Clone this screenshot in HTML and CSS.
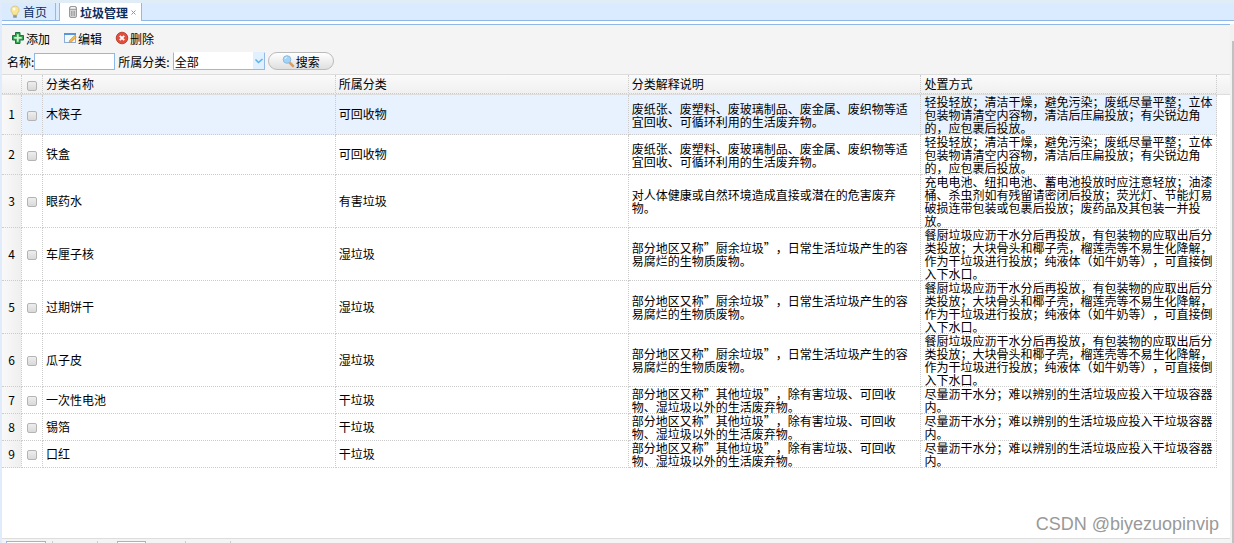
FILE: index.html
```html
<!DOCTYPE html>
<html lang="zh-CN">
<head>
<meta charset="utf-8">
<title>垃圾管理</title>
<link rel="stylesheet" href="styles.css">
</head>
<body>
<div class="app">
  <nav class="tabs">
    <a class="tab" href="#home">
      <svg class="icon-sm" viewBox="0 0 12 14"><path d="M6 1a4 4 0 0 0-2.500 7.200L4 10h4l.5-1.800A4 4 0 0 0 6 1z" fill="#f8e596" stroke="#d8c27c" stroke-width=".8"/><path d="M4.200 10.200h3.600v2.500H4.200z" fill="#8d949c"/><circle cx="5" cy="4" r="1.500" fill="#fffce8"/></svg>
      <span>首页</span>
    </a>
    <a class="tab tab-active" href="#garbage">
      <svg class="icon-sm" viewBox="0 0 12 14"><rect x="2.500" y="1.500" width="7" height="11" rx="1.500" fill="#d4d4d4" stroke="#999"/><path d="M3 4.500h6M4.500 6v5M6 6v5M7.500 6v5" stroke="#999" stroke-width=".8"/><path d="M4 2.800h4" stroke="#fff"/></svg>
      <span>垃圾管理</span>
      <button class="tab-close" type="button" aria-label="关闭"><svg class="icon-close" viewBox="0 0 5 5"><path d="M.5.5l4 4M4.500.5l-4 4" stroke="#6c9fd6"/></svg></button>
    </a>
  </nav>
  <main class="panel">
    <div class="toolbar">
      <div class="actions">
        <button class="action" type="button">
          <svg class="icon" viewBox="0 0 14 14"><path d="M4.500 1.500h4.500V4.500h3.500v4.500H9v3.500H4.500V9H1.500V4.500h3z" fill="#35a552" stroke="#16783a" stroke-linejoin="round"/><path d="M6.800 3.300v7.400M3.200 6.800h7.500" stroke="#d5f3d0" stroke-width="1.800"/></svg>添加
        </button>
        <button class="action" type="button">
          <svg class="icon" viewBox="0 0 14 14"><rect x="1.500" y="2.500" width="11" height="9" fill="#f4f9ff" stroke="#8aaed5"/><path d="M1 2h12v2H1z" fill="#5596dc"/><path d="M6 11.500l.7-2.300L11.500 4.500l1.800 1.700-4.800 4.700z" fill="#f5b64c" stroke="#c98731" stroke-width=".6"/></svg>编辑
        </button>
        <button class="action" type="button">
          <svg class="icon" viewBox="0 0 14 14"><circle cx="7" cy="7" r="5.800" fill="#e0503c" stroke="#b52d1f" stroke-width=".8"/><path d="M4.800 4.800l4.400 4.400M9.200 4.800L4.800 9.200" stroke="#fff" stroke-width="1.900"/></svg>删除
        </button>
      </div>
      <form class="filters">
        <label for="name">名称:</label>
        <input class="field" id="name" type="text">
        <label class="label-category" for="category">所属分类:</label>
        <span class="combo">
          <select class="combo-select" id="category"><option>全部</option></select>
          <svg class="combo-arrow" viewBox="0 0 11 17"><path d="M2.500 7.500l3 3 4-3.500" fill="none" stroke="#5bb4ee" stroke-width="1.600"/></svg>
        </span>
        <button class="search" type="button">
          <svg class="icon" viewBox="0 0 14 14"><path d="M8.500 8.500l3.500 3.500" stroke="#dc9b62" stroke-width="2.500" stroke-linecap="round"/><circle cx="6" cy="5.500" r="3.800" fill="#9fd5f8" stroke="#91b9dd"/><path d="M4 5a2 2 0 0 1 2-1.800" stroke="#e9f8ff" fill="none"/></svg>搜索
        </button>
      </form>
    </div>
    <div class="grid">
      <table class="data">
        <colgroup><col class="col-number"><col class="col-check"><col class="col-text"><col class="col-text"><col class="col-text"><col></colgroup>
        <thead>
          <tr><th></th><th class="check"><input type="checkbox" aria-label="全选"></th><th>分类名称</th><th>所属分类</th><th>分类解释说明</th><th>处置方式</th></tr>
        </thead>
        <tbody>
          <tr class="selected"><td class="number">1</td><td class="check"><input type="checkbox" aria-label="木筷子"></td><td>木筷子</td><td>可回收物</td><td>废纸张、废塑料、废玻璃制品、废金属、废织物等适宜回收、可循环利用的生活废弃物。</td><td>轻投轻放；清洁干燥，避免污染；废纸尽量平整；立体包装物请清空内容物，清洁后压扁投放；有尖锐边角的，应包裹后投放。</td></tr>
          <tr><td class="number">2</td><td class="check"><input type="checkbox" aria-label="铁盒"></td><td>铁盒</td><td>可回收物</td><td>废纸张、废塑料、废玻璃制品、废金属、废织物等适宜回收、可循环利用的生活废弃物。</td><td>轻投轻放；清洁干燥，避免污染；废纸尽量平整；立体包装物请清空内容物，清洁后压扁投放；有尖锐边角的，应包裹后投放。</td></tr>
          <tr><td class="number">3</td><td class="check"><input type="checkbox" aria-label="眼药水"></td><td>眼药水</td><td>有害垃圾</td><td>对人体健康或自然环境造成直接或潜在的危害废弃物。</td><td>充电电池、纽扣电池、蓄电池投放时应注意轻放；油漆桶、杀虫剂如有残留请密闭后投放；荧光灯、节能灯易破损连带包装或包裹后投放；废药品及其包装一并投放。</td></tr>
          <tr><td class="number">4</td><td class="check"><input type="checkbox" aria-label="车厘子核"></td><td>车厘子核</td><td>湿垃圾</td><td>部分地区又称”厨余垃圾”，日常生活垃圾产生的容易腐烂的生物质废物。</td><td>餐厨垃圾应沥干水分后再投放，有包装物的应取出后分类投放；大块骨头和椰子壳，榴莲壳等不易生化降解，作为干垃圾进行投放；纯液体（如牛奶等），可直接倒入下水口。</td></tr>
          <tr><td class="number">5</td><td class="check"><input type="checkbox" aria-label="过期饼干"></td><td>过期饼干</td><td>湿垃圾</td><td>部分地区又称”厨余垃圾”，日常生活垃圾产生的容易腐烂的生物质废物。</td><td>餐厨垃圾应沥干水分后再投放，有包装物的应取出后分类投放；大块骨头和椰子壳，榴莲壳等不易生化降解，作为干垃圾进行投放；纯液体（如牛奶等），可直接倒入下水口。</td></tr>
          <tr><td class="number">6</td><td class="check"><input type="checkbox" aria-label="瓜子皮"></td><td>瓜子皮</td><td>湿垃圾</td><td>部分地区又称”厨余垃圾”，日常生活垃圾产生的容易腐烂的生物质废物。</td><td>餐厨垃圾应沥干水分后再投放，有包装物的应取出后分类投放；大块骨头和椰子壳，榴莲壳等不易生化降解，作为干垃圾进行投放；纯液体（如牛奶等），可直接倒入下水口。</td></tr>
          <tr><td class="number">7</td><td class="check"><input type="checkbox" aria-label="一次性电池"></td><td>一次性电池</td><td>干垃圾</td><td>部分地区又称”其他垃圾”，除有害垃圾、可回收物、湿垃圾以外的生活废弃物。</td><td>尽量沥干水分；难以辨别的生活垃圾应投入干垃圾容器内。</td></tr>
          <tr><td class="number">8</td><td class="check"><input type="checkbox" aria-label="锡箔"></td><td>锡箔</td><td>干垃圾</td><td>部分地区又称”其他垃圾”，除有害垃圾、可回收物、湿垃圾以外的生活废弃物。</td><td>尽量沥干水分；难以辨别的生活垃圾应投入干垃圾容器内。</td></tr>
          <tr><td class="number">9</td><td class="check"><input type="checkbox" aria-label="口红"></td><td>口红</td><td>干垃圾</td><td>部分地区又称”其他垃圾”，除有害垃圾、可回收物、湿垃圾以外的生活废弃物。</td><td>尽量沥干水分；难以辨别的生活垃圾应投入干垃圾容器内。</td></tr>
        </tbody>
      </table>
    </div>
    <footer class="pager">
      <select class="page-size" aria-label="每页条数"></select>
      <i class="sep"></i><i class="sep"></i>
      <input class="page-number" type="text" aria-label="页码">
      <i class="sep"></i><i class="sep"></i>
    </footer>
  </main>
  <div class="scroll"><div class="thumb"></div></div>
  <p class="watermark">CSDN @biyezuopinvip</p>
</div>
</body>
</html>
```

FILE: styles.css
```css
* { box-sizing: border-box; }

body {
  margin: 0;
  font: 12px/13px "Noto Sans CJK SC", sans-serif;
  text-spacing-trim: space-all;
  color: #000;
}

button, input, select { font: inherit; color: inherit; margin: 0; padding: 0; }

.app {
  position: relative;
  height: 100vh;
  overflow: hidden;
  display: grid;
  grid-template-columns: 1fr 4px;
  grid-template-rows: 24px 1fr;
  border-left: 2px solid #e0ecfb;
  background: #fff;
}

/* tab strip */
.tabs {
  grid-column: 1 / -1;
  display: flex;
  gap: 3px;
  height: 21px;
  padding-top: 3px;
  background: linear-gradient(#e0edf7 3px, #daebff 3px);
  border-bottom: 1px solid #8db8e7;
}
.tab {
  display: flex;
  align-items: center;
  gap: 2px;
  padding: 0 8px 0 7px;
  border-right: 1px solid #95b8e7;
  color: #0e2d5f;
  text-decoration: none;
}
.tab-active {
  height: 18px;
  gap: 1px;
  padding: 0 5px 0 7px;
  border-left: 1px solid #95b8e7;
  background: #fff;
  font-weight: bold;
}
.tab-close {
  display: flex;
  margin-left: 2px;
  border: 0;
  background: none;
}
.icon-close { width: 5px; height: 5px; }
.icon-sm { width: 12px; height: 14px; }
.icon { width: 14px; height: 14px; }

/* main panel */
.panel {
  display: flex;
  flex-direction: column;
  min-width: 0;
  min-height: 0;
  border-top: 1px solid #8db8e7;
}
.toolbar {
  height: 50px;
  padding-top: 3px;
  background: #f4f4f4;
  border-bottom: 1px solid #ddd;
}
.actions { display: flex; gap: 13px; padding-left: 9px; height: 20px; }
.action {
  display: flex;
  align-items: center;
  gap: 1px;
  border: 0;
  background: none;
}
.filters { display: flex; align-items: center; height: 26px; padding-left: 5px; }
.field {
  width: 81px;
  height: 17px;
  border: 1px solid #8db8e7;
  background: #fff;
}
.label-category { margin: 0 3px; }
.combo { position: relative; width: 92px; height: 18px; }
.combo-select {
  width: 100%;
  height: 100%;
  padding-left: 1px;
  appearance: none;
  border: 1px solid #95b8e7;
  border-top-color: #fff;
  border-radius: 0;
  background: #fff;
}
.combo-arrow {
  position: absolute;
  top: 0;
  right: 1px;
  width: 11px;
  height: 17px;
  background: #e0f0fe;
  pointer-events: none;
}
.search {
  display: flex;
  align-items: center;
  justify-content: center;
  gap: 1px;
  width: 66px;
  height: 18px;
  margin-left: 3px;
  padding-right: 1px;
  border: 1px solid #bbb;
  border-radius: 9px;
  background: linear-gradient(#fff, #dfdfdf);
}

/* data grid */
.grid {
  flex: 1;
  min-height: 0;
  padding-right: 13px;
  background:
    linear-gradient(#ddd, #ddd) 0 19px / 100% 1px no-repeat,
    linear-gradient(#fafafa, #efefef) 0 0 / 100% 20px no-repeat,
    #fff;
}
.data {
  width: 100%;
  table-layout: fixed;
  border-collapse: separate;
  border-spacing: 0;
}
.col-number { width: 20px; }
.col-check { width: 21px; }
.col-text { width: 24.1%; }
.data th, .data td {
  padding: 0 1px 0 3px;
  border-right: 1px dotted #ccc;
  border-bottom: 1px dotted #ccc;
  text-align: left;
  font-weight: normal;
  vertical-align: middle;
}
.data td:nth-child(3), .data td:nth-child(4) { padding-bottom: 2px; }
.data td:nth-child(5) { padding-right: 4px; }
.data th {
  height: 20px;
  padding-bottom: 2px;
  border-bottom: 1px solid #ddd;
  background: repeating-linear-gradient(to right, #ccc 0 1px, transparent 1px 2px) 0 100% / 100% 1px no-repeat;
}
.data .number { padding: 0 0 2px; text-align: center; background: linear-gradient(to right, #f9f9f9, #efefef); }
.data .check { padding: 0; text-align: center; line-height: 0; }
.selected { background: #e8f2fe; }
input[type="checkbox"] {
  appearance: none;
  width: 10px;
  height: 10px;
  margin-top: 2px;
  border: 1px solid #b4b4b4;
  border-radius: 2px;
  background: linear-gradient(#eee, #d9d9d9);
}

/* pager */
.pager {
  display: flex;
  flex: none;
  height: 5px;
  padding: 2px 0 0 4px;
  overflow: hidden;
  background: #f4f4f4;
  border-top: 1px solid #ddd;
}
.page-size, .page-number {
  flex: none;
  width: 40px;
  height: 20px;
  appearance: none;
  border: 1px solid #8db8e7;
  border-radius: 0;
  background: #fff;
}
.page-number { width: 29px; margin-left: 19px; }
.sep { width: 1px; height: 20px; margin-left: 44px; background: #ccc; }
.page-size + .sep { margin-left: 6px; }
.page-number + .sep { margin-left: 39px; }

.scroll { padding: 17px 0 0 2px; background: #f1f1f1; }
.thumb { height: 100%; background: #c1c1c1; }

.watermark {
  position: absolute;
  right: 15px;
  bottom: 9px;
  margin: 0;
  font: 18px/20px "Liberation Sans", sans-serif;
  color: #999;
}
```
